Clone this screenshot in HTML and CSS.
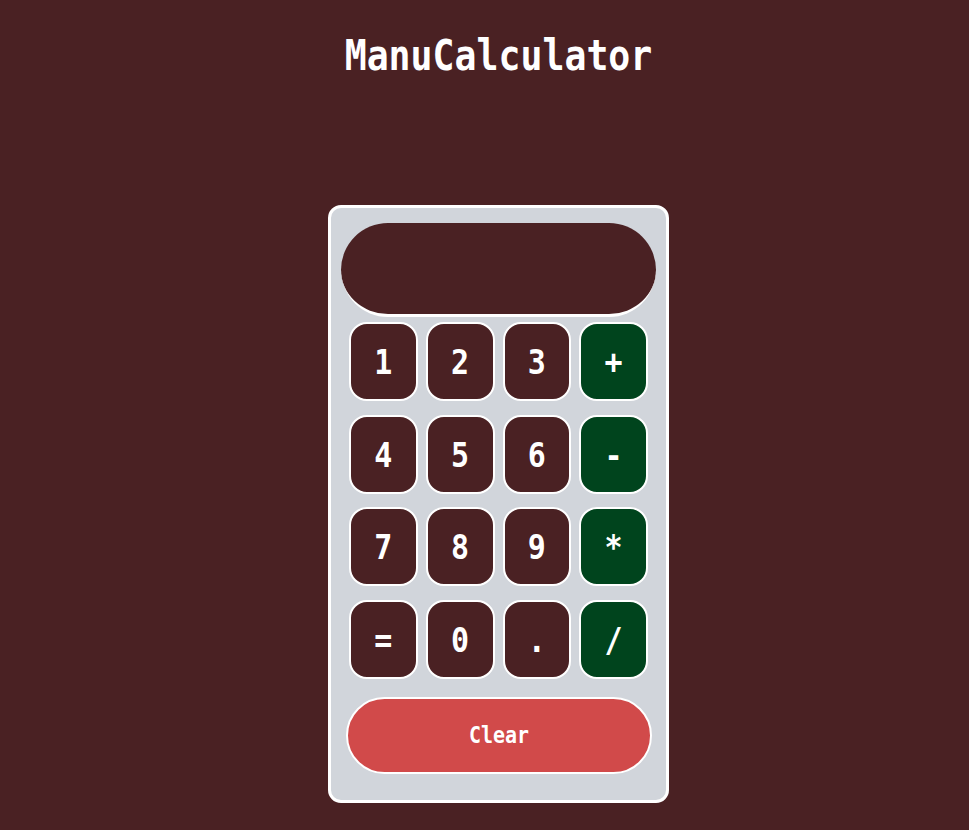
FILE: index.html
```html
<!DOCTYPE html>
<html>
<head>
<meta charset="utf-8">
<title>ManuCalculator</title>
<link rel="stylesheet" href="styles.css">
</head>
<body>
<main class="page">
  <h1 class="title"><span class="tall">ManuCalculator</span></h1>
  <div class="calc">
    <div class="display"></div>
    <div class="keys">
      <button class="key num"><span class="tall">1</span></button>
      <button class="key num"><span class="tall">2</span></button>
      <button class="key num"><span class="tall">3</span></button>
      <button class="key op"><span class="tall">+</span></button>
      <button class="key num"><span class="tall">4</span></button>
      <button class="key num"><span class="tall">5</span></button>
      <button class="key num"><span class="tall">6</span></button>
      <button class="key op"><span class="tall">-</span></button>
      <button class="key num"><span class="tall">7</span></button>
      <button class="key num"><span class="tall">8</span></button>
      <button class="key num"><span class="tall">9</span></button>
      <button class="key op"><span class="tall">*</span></button>
      <button class="key num"><span class="tall">=</span></button>
      <button class="key num"><span class="tall">0</span></button>
      <button class="key num"><span class="tall">.</span></button>
      <button class="key op"><span class="tall">/</span></button>
    </div>
    <button class="clear"><span class="tall">Clear</span></button>
  </div>
</main>
</body>
</html>
```
FILE: styles.css
```css
html, body {
  margin: 0;
  padding: 0;
  background: #4a2123;
  height: 100%;
}
body {
  font-family: "DejaVu Sans Mono", monospace;
  color: #fff;
}
.page {
  display: flex;
  flex-direction: column;
  align-items: center;
  padding-left: 28px;
}
.tall {
  display: inline-block;
  transform: scaleY(1.15);
}
.title {
  margin: 34px 0 0;
  font-size: 36.5px;
  line-height: 44px;
  font-weight: bold;
  color: #fff;
}
.calc {
  margin-top: 127px;
  border: 3px solid #fff;
  border-radius: 13px;
  background: #d1d5db;
  padding: 15px 10px 26px;
  box-sizing: border-box;
  width: 341px;
}
.display {
  height: 91px;
  border-radius: 47px;
  background: #4a2123;
  border-bottom: 3px solid #fff;
}
.keys {
  margin-top: 5px;
  padding: 0 8px;
  display: grid;
  grid-template-columns: repeat(4, 1fr);
  grid-auto-rows: 79px;
  column-gap: 8px;
  row-gap: 13.5px;
}
.key {
  font-family: "DejaVu Sans Mono", monospace;
  font-weight: bold;
  font-size: 30px;
  color: #fff;
  border: 2px solid #fff;
  border-radius: 18px;
  padding: 0;
  display: flex;
  align-items: center;
  justify-content: center;
}
.num { background: #4a2123; }
.op { background: #00441d; }
.clear {
  display: block;
  margin: 18px 4px 0 5px;
  width: calc(100% - 9px);
  height: 77px;
  border: 2px solid #fff;
  border-radius: 39px;
  background: #d14a4a;
  color: #fff;
  font-family: "DejaVu Sans Mono", monospace;
  font-weight: bold;
  font-size: 20px;
}
```
